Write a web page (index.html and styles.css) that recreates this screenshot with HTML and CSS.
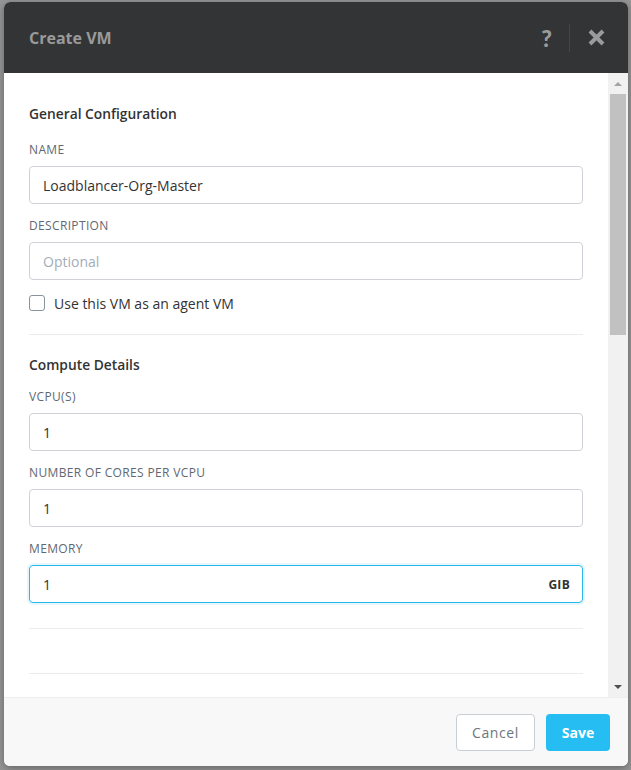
FILE: index.html
```html
<!DOCTYPE html>
<html>
<head>
<meta charset="utf-8">
<link rel="stylesheet" href="styles.css">
</head>
<body>
<div class="modal">
  <div class="header">
    <h1 class="title">Create VM</h1>
    <div class="actions">
      <span class="help">?</span>
      <span class="sep"></span>
      <span class="close">
        <svg width="17" height="17" viewBox="0 0 17 17"><path d="M2 2 L15 15 M15 2 L2 15" stroke="#9b9b9b" stroke-width="4" stroke-linecap="butt"/></svg>
      </span>
    </div>
  </div>
  <div class="body">
    <div class="content">
      <div class="section-title first">General Configuration</div>
      <div class="label">NAME</div>
      <div class="input"><span class="value">Loadblancer-Org-Master</span></div>
      <div class="label">DESCRIPTION</div>
      <div class="input"><span class="placeholder">Optional</span></div>
      <label class="check-row"><span class="checkbox"></span><span class="check-text">Use this VM as an agent VM</span></label>
      <div class="divider first-div"></div>
      <div class="section-title second">Compute Details</div>
      <div class="label">VCPU(S)</div>
      <div class="input"><span class="value">1</span></div>
      <div class="label">NUMBER OF CORES PER VCPU</div>
      <div class="input"><span class="value">1</span></div>
      <div class="label">MEMORY</div>
      <div class="input focus"><span class="value">1</span><span class="unit">GIB</span></div>
      <div class="divider div-a"></div>
      <div class="divider div-b"></div>
    </div>
    <div class="scrollbar">
      <div class="arrow up"><span class="tri-up"></span></div>
      <div class="thumb"></div>
      <div class="track-fill"></div>
      <div class="arrow down"><span class="tri-down"></span></div>
    </div>
  </div>
  <div class="footer">
    <button class="btn cancel">Cancel</button>
    <button class="btn save">Save</button>
  </div>
</div>
</body>
</html>
```

FILE: styles.css
```css
html, body {
  margin: 0;
  padding: 0;
}
body {
  width: 631px;
  height: 770px;
  background: #979797;
  padding: 2px 0 0 4px;
  box-sizing: border-box;
  font-family: "Open Sans", Lato, sans-serif;
  overflow: hidden;
}
.modal {
  width: 624px;
  height: 764px;
  border-radius: 6px;
  overflow: hidden;
  display: flex;
  flex-direction: column;
  box-shadow: 0 2px 8px rgba(0,0,0,0.35);
  background: #fff;
}
.header {
  height: 71px;
  flex: none;
  background: #333436;
  display: flex;
  align-items: center;
  justify-content: space-between;
  padding: 0 23px 0 25px;
}
.title {
  margin: 0;
  font-size: 16px;
  font-weight: 700;
  color: #9a9a9a;
  letter-spacing: 0;
}
.actions {
  display: flex;
  align-items: center;
}
.help {
  font-family: Lato, sans-serif;
  font-size: 23px;
  font-weight: 900;
  color: #9b9b9b;
  line-height: 20px;
}
.sep {
  width: 1px;
  height: 28px;
  background: #444548;
  margin: 0 18px 0 17px;
}
.close {
  display: flex;
  width: 17px;
  height: 17px;
}
.body {
  height: 624px;
  flex: none;
  display: flex;
}
.content {
  flex: 1;
  padding: 33px 25px 0 25px;
  overflow: hidden;
}
.section-title {
  font-size: 13.8px;
  font-weight: 600;
  line-height: 16px;
  color: #333;
}
.section-title.first { margin-bottom: 20px; }
.section-title.second { margin-bottom: 16px; }
.label {
  font-size: 12px;
  line-height: 15px;
  color: #5f6872;
  letter-spacing: 0.35px;
  margin-bottom: 9px;
}
.input {
  height: 38px;
  box-sizing: border-box;
  border: 1px solid #cfd3d7;
  border-radius: 4px;
  display: flex;
  align-items: center;
  justify-content: space-between;
  padding: 0 12px 0 13px;
  font-size: 14px;
  margin-bottom: 14px;
}
.input .value { color: #333; }
.input .placeholder { color: #a3adb8; }
.input.focus {
  border-color: #2bb6ea;
  box-shadow: 0 0 0 2px rgba(43,182,234,0.12);
}
.unit {
  font-size: 12px;
  font-weight: 700;
  color: #333;
  letter-spacing: 0.3px;
}
.check-row {
  display: flex;
  align-items: center;
  height: 16px;
  margin-top: 15px;
}
.checkbox {
  width: 16px;
  height: 16px;
  box-sizing: border-box;
  border: 1px solid #8893a0;
  border-radius: 3px;
  margin-right: 9px;
}
.check-text {
  font-size: 14px;
  color: #333;
}
.divider {
  height: 1px;
  background: #ececec;
}
.first-div { margin-top: 23px; margin-bottom: 22px; }
.div-a { margin-top: 25px; }
.div-b { margin-top: 44px; }
.scrollbar {
  width: 20px;
  flex: none;
  background: #f1f1f1;
  display: flex;
  flex-direction: column;
}
.arrow {
  height: 21px;
  display: flex;
  align-items: center;
  justify-content: center;
}
.tri-up {
  width: 0;
  height: 0;
  border-left: 4px solid transparent;
  border-right: 4px solid transparent;
  border-bottom: 4px solid #a3a3a3;
}
.tri-down {
  width: 0;
  height: 0;
  border-left: 4px solid transparent;
  border-right: 4px solid transparent;
  border-top: 4px solid #505050;
}
.thumb {
  height: 241px;
  margin: 0 2px;
  background: #c1c1c1;
}
.track-fill { flex: 1; }
.footer {
  flex: 1;
  background: #f8f8f8;
  border-top: 1px solid #eeeeee;
  display: flex;
  align-items: center;
  justify-content: flex-end;
  padding-right: 18px;
  gap: 11px;
}
.btn {
  height: 37px;
  border-radius: 4px;
  font-family: "Open Sans", Lato, sans-serif;
  font-size: 14px;
  padding: 0;
}
.cancel {
  width: 79px;
  background: #fff;
  border: 1px solid #c9ced3;
  color: #6d7680;
  letter-spacing: 0.6px;
}
.save {
  width: 64px;
  background: #26bdf2;
  border: none;
  color: #fff;
  font-weight: 700;
}
```
